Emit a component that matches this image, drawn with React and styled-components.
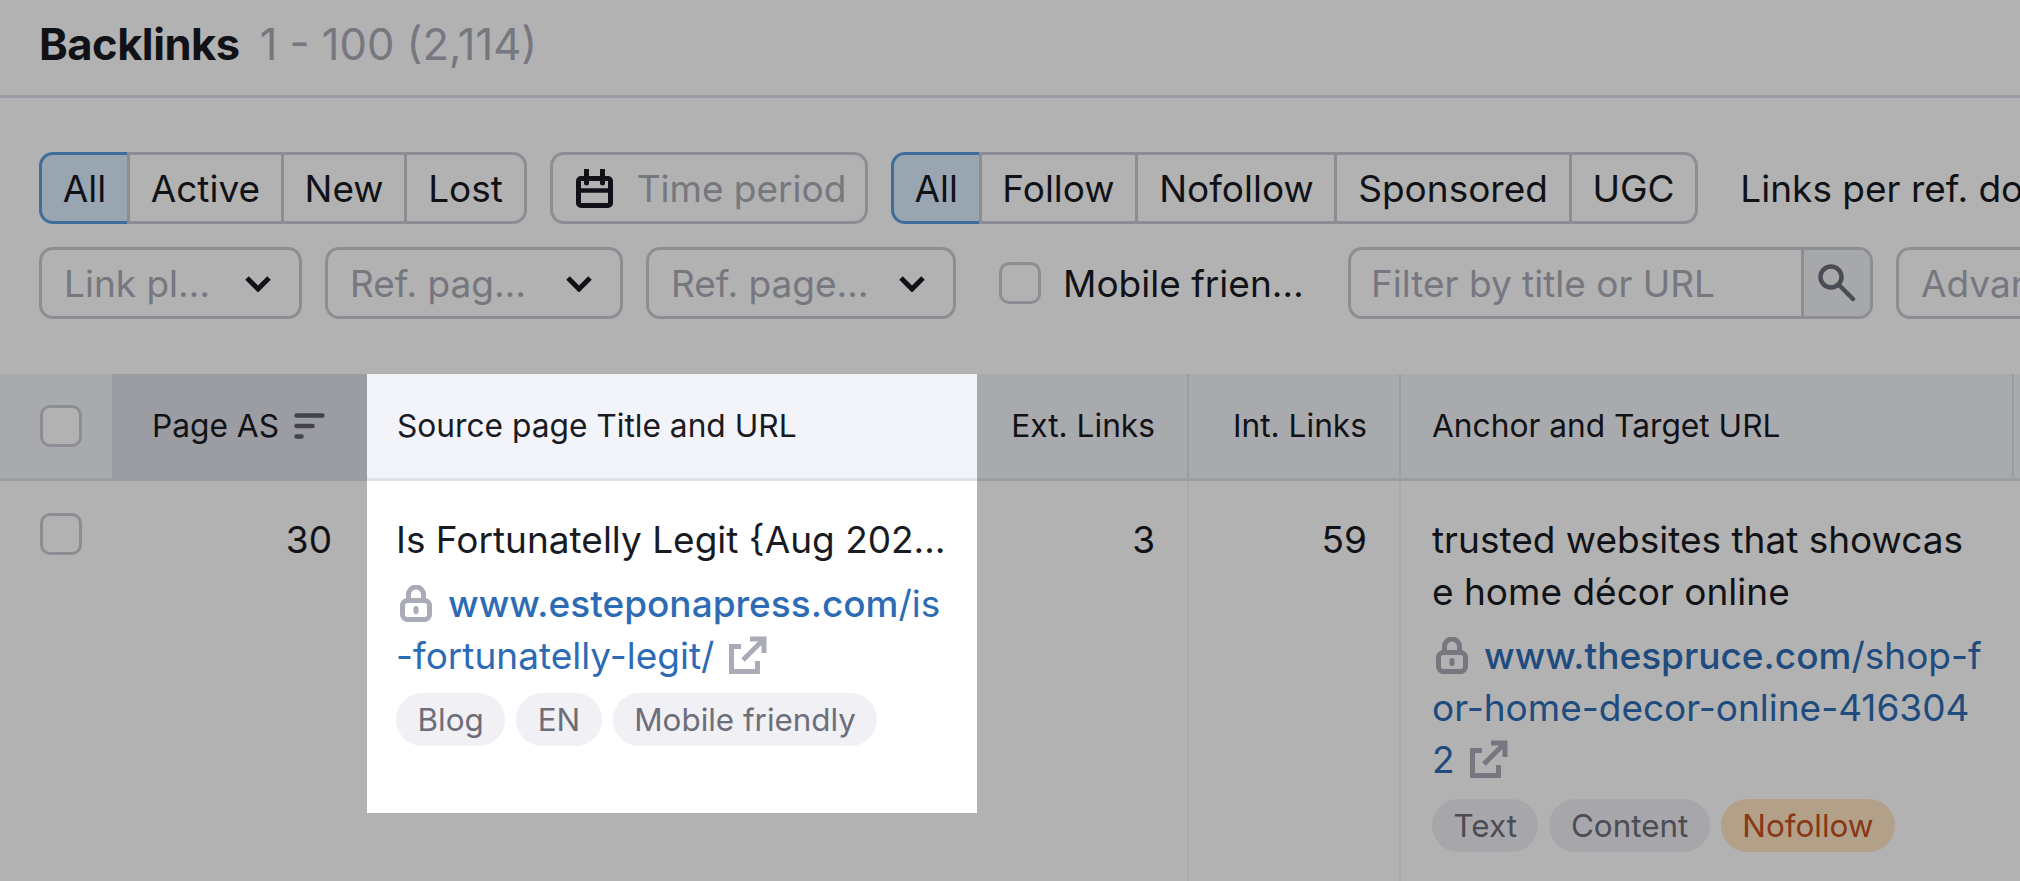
import React from 'react';
import styled, { createGlobalStyle, css } from 'styled-components';

const GlobalStyle = createGlobalStyle`
  html, body {
    margin: 0;
    background: #fff;
  }
  #root {
    width: 2020px;
    height: 881px;
    overflow: hidden;
    font-family: Inter, "Liberation Sans", sans-serif;
    color: #191b23;
  }
`;

const TitleBar = styled.header`
  box-sizing: border-box;
  height: 98px;
  padding: 19px 39px 0;
  border-bottom: 3px solid #dcdde8;
  display: flex;
  align-items: baseline;
  gap: 20px;
  font-size: 43.5px;
  line-height: 50px;
`;

const Title = styled.h1`
  margin: 0;
  font-size: 43.5px;
  font-weight: 700;
  letter-spacing: -0.5px;
`;

const Count = styled.span`
  color: #a9abb6;
`;

const Filters = styled.section`
  box-sizing: border-box;
  height: 276px;
  padding: 54px 0 0 39px;
  display: flex;
  flex-direction: column;
  gap: 23px;
  white-space: nowrap;
  font-size: 37px;
`;

const FilterRow = styled.div`
  display: flex;
  align-items: center;
  gap: 23px;
  height: 72px;

  > * {
    flex: none;
  }
`;

const Segmented = styled.div`
  display: flex;
  height: 72px;
`;

const Segment = styled.button`
  box-sizing: border-box;
  height: 72px;
  margin: 0 0 0 -3px;
  padding: 0 20.75px;
  font: inherit;
  color: #191b23;
  background: #fff;
  border: 3px solid #c9ccd4;
  position: relative;

  &:first-child {
    margin-left: 0;
    border-radius: 14px 0 0 14px;
  }
  &:last-child {
    border-radius: 0 14px 14px 0;
  }
  ${(p) =>
    p.$active &&
    css`
      background: #dbeeff;
      border-color: #5b9ee0;
      z-index: 0;
    `}
`;

const TimeButton = styled.div`
  box-sizing: border-box;
  width: 318px;
  height: 72px;
  padding-left: 23px;
  display: flex;
  align-items: center;
  gap: 24px;
  color: #a9abb6;
  border: 3px solid #c9ccd4;
  border-radius: 14px;
`;

const PerDomain = styled.span`
  margin-left: 19px;
`;

const Select = styled.div`
  box-sizing: border-box;
  width: ${(p) => p.$width}px;
  height: 72px;
  padding: 0 27px 0 22px;
  display: flex;
  align-items: center;
  justify-content: space-between;
  color: #a9abb6;
  border: 3px solid #c9ccd4;
  border-radius: 14px;
`;

const Check = styled.span`
  box-sizing: border-box;
  display: block;
  flex: none;
  width: 42px;
  height: 42px;
  background: #fff;
  border: 3px solid #c9ccd4;
  border-radius: 10px;
`;

const CheckLabel = styled.label`
  margin-left: 20px;
  display: flex;
  align-items: center;
  gap: 22px;
  width: 326px;
`;

const SearchBox = styled.div`
  box-sizing: border-box;
  width: 525px;
  height: 72px;
  display: flex;
  border: 3px solid #c9ccd4;
  border-radius: 14px;
  overflow: hidden;
`;

const SearchInput = styled.div`
  flex: 1;
  padding-left: 20px;
  display: flex;
  align-items: center;
  color: #a9abb6;
`;

const SearchButton = styled.div`
  flex: none;
  width: 66px;
  display: flex;
  align-items: center;
  justify-content: center;
  background: #f0f1f4;
  border-left: 3px solid #c9ccd4;
`;

const Advanced = styled.div`
  box-sizing: border-box;
  width: 300px;
  height: 72px;
  padding-left: 22px;
  display: flex;
  align-items: center;
  color: #a9abb6;
  border: 3px solid #c9ccd4;
  border-radius: 14px;
`;

const Table = styled.section`
  display: flex;
  align-items: flex-start;
  font-size: 37px;
  line-height: 52px;
`;

const Column = styled.div`
  box-sizing: border-box;
  flex: none;
  width: ${(p) => p.$width}px;
`;

const Spotlight = styled(Column)`
  position: relative;
  z-index: 1;
  background: #fff;
  box-shadow: 0 0 0 3000px rgba(0, 0, 0, 0.3);
`;

const HeadCell = styled.div`
  box-sizing: border-box;
  height: 107px;
  padding: 0 ${(p) => p.$padRight ?? 32}px 0 ${(p) => p.$padLeft ?? 31}px;
  display: flex;
  align-items: center;
  justify-content: ${(p) => (p.$right ? 'flex-end' : 'flex-start')};
  gap: 15px;
  font-size: 31.7px;
  white-space: nowrap;
  background: ${(p) => (p.$sorted ? '#e0e1e9' : '#f3f4f9')};
  border-bottom: 3px solid #e0e1e9;
  border-left: ${(p) => (p.$divider ? '2px solid #e0e1e9' : '0')};
`;

const BodyCell = styled.div`
  box-sizing: border-box;
  padding: 33px ${(p) => p.$padRight ?? 32}px 0 ${(p) => p.$padLeft ?? 31}px;
  text-align: ${(p) => (p.$right ? 'right' : 'left')};
  min-height: 401px;
  border-left: ${(p) => (p.$divider ? '2px solid #f3f4f9' : '0')};
`;

const SpotCell = styled.div`
  box-sizing: border-box;
  height: 332px;
  padding: 33px 0 0 29px;
`;

const RowCheck = styled.div`
  padding: 32px 0 0 40px;
`;

const HeadCheck = styled.div`
  height: 107px;
  padding-left: 40px;
  display: flex;
  align-items: center;
  background: #f3f4f9;
  box-sizing: border-box;
  border-bottom: 3px solid #e0e1e9;
`;

const PageTitle = styled.div`
  white-space: nowrap;
`;

const Anchor = styled.div`
  word-break: break-all;
`;

const LinkText = styled.a`
  display: block;
  margin-top: 12px;
  color: #2d6cb5;
  word-break: break-all;
  text-decoration: none;

  b {
    font-weight: 500;
  }
`;

const Lock = styled.svg`
  width: 32px;
  height: 37px;
  margin: 0 16px 0 4px;
  vertical-align: -5px;
`;

const External = styled.svg`
  width: 38px;
  height: 38px;
  margin-left: 15px;
  vertical-align: -5px;
`;

const Tags = styled.div`
  display: flex;
  gap: 11px;
  margin-top: ${(p) => p.$top}px;
`;

const Tag = styled.span`
  box-sizing: border-box;
  height: 53px;
  padding: 0 21.5px;
  display: flex;
  align-items: center;
  font-size: 31.4px;
  border-radius: 27px;
  color: ${(p) => (p.$warn ? '#c4501f' : '#6c6e79')};
  background: ${(p) => (p.$warn ? '#ffe6c4' : '#f0f0f5')};
`;

const CalendarIcon = () => (
  <svg width="37" height="39" viewBox="0 0 37 39" fill="none">
    <rect x="2.5" y="9.5" width="32" height="27" rx="2.5" stroke="#191b23" strokeWidth="5" />
    <path d="M2 21.5h33" stroke="#191b23" strokeWidth="4.5" />
    <path d="M10.5 1v13M26.5 1v13" stroke="#191b23" strokeWidth="5" strokeLinecap="round" />
  </svg>
);

const Chevron = () => (
  <svg width="28" height="17" viewBox="0 0 28 17" fill="none">
    <path d="M3 3l11 11L25 3" stroke="#191b23" strokeWidth="5" />
  </svg>
);

const SearchIcon = () => (
  <svg width="38" height="38" viewBox="0 0 38 38" fill="none">
    <circle cx="13" cy="13" r="10.5" stroke="#6c6e79" strokeWidth="4.5" />
    <path d="M21 21l14 14" stroke="#6c6e79" strokeWidth="4.5" strokeLinecap="round" />
  </svg>
);

const SortIcon = () => (
  <svg width="31" height="26" viewBox="0 0 31 26" fill="none">
    <path d="M2.5 2.5h26M2.5 13h16M2.5 23.5h5" stroke="#5f616c" strokeWidth="4.5" strokeLinecap="round" />
  </svg>
);

const LockIcon = () => (
  <Lock viewBox="0 0 32 37" fill="none">
    <path d="M8.5 16V9.5a7.5 7.5 0 0 1 15 0V16" stroke="#a9abb6" strokeWidth="5" />
    <rect x="2.5" y="15.5" width="27" height="19" rx="5" stroke="#a9abb6" strokeWidth="5" />
    <rect x="13.5" y="21" width="5" height="8" rx="2.5" fill="#a9abb6" />
  </Lock>
);

const ExternalIcon = () => (
  <External viewBox="0 0 38 38" fill="none">
    <path d="M12 10.5H2.5V35.5H28.5V25" stroke="#a9abb6" strokeWidth="5" />
    <path d="M14 24L34 4M21 3h14v14" stroke="#a9abb6" strokeWidth="5" />
  </External>
);

export default function App() {
  return (
    <>
      <GlobalStyle />
      <TitleBar>
        <Title>Backlinks</Title>
        <Count>1 - 100 (2,114)</Count>
      </TitleBar>
      <Filters>
        <FilterRow>
          <Segmented>
            <Segment $active>All</Segment>
            <Segment>Active</Segment>
            <Segment>New</Segment>
            <Segment>Lost</Segment>
          </Segmented>
          <TimeButton>
            <CalendarIcon />
            Time period
          </TimeButton>
          <Segmented>
            <Segment $active>All</Segment>
            <Segment>Follow</Segment>
            <Segment>Nofollow</Segment>
            <Segment>Sponsored</Segment>
            <Segment>UGC</Segment>
          </Segmented>
          <PerDomain>Links per ref. domain</PerDomain>
        </FilterRow>
        <FilterRow>
          <Select $width={263}>
            Link pl…
            <Chevron />
          </Select>
          <Select $width={298}>
            Ref. pag…
            <Chevron />
          </Select>
          <Select $width={310}>
            Ref. page…
            <Chevron />
          </Select>
          <CheckLabel>
            <Check />
            Mobile frien…
          </CheckLabel>
          <SearchBox>
            <SearchInput>Filter by title or URL</SearchInput>
            <SearchButton>
              <SearchIcon />
            </SearchButton>
          </SearchBox>
          <Advanced>Advanced filters</Advanced>
        </FilterRow>
      </Filters>
      <Table>
        <Column $width={112}>
          <HeadCheck>
            <Check />
          </HeadCheck>
          <RowCheck>
            <Check />
          </RowCheck>
        </Column>
        <Column $width={255}>
          <HeadCell $sorted $right $padRight={42}>
            Page AS
            <SortIcon />
          </HeadCell>
          <BodyCell $right $padRight={35}>
            30
          </BodyCell>
        </Column>
        <Spotlight $width={610}>
          <HeadCell $padLeft={30}>Source page Title and URL</HeadCell>
          <SpotCell>
            <PageTitle>Is Fortunatelly Legit {'{'}Aug 202…</PageTitle>
            <LinkText>
              <LockIcon />
              <b>www.esteponapress.com</b>/is
              <br />
              -fortunatelly-legit/
              <ExternalIcon />
            </LinkText>
            <Tags $top={11}>
              <Tag>Blog</Tag>
              <Tag>EN</Tag>
              <Tag>Mobile friendly</Tag>
            </Tags>
          </SpotCell>
        </Spotlight>
        <Column $width={210}>
          <HeadCell $right>Ext. Links</HeadCell>
          <BodyCell $right>3</BodyCell>
        </Column>
        <Column $width={212}>
          <HeadCell $right $divider>
            Int. Links
          </HeadCell>
          <BodyCell $right $divider>
            59
          </BodyCell>
        </Column>
        <Column $width={613}>
          <HeadCell $divider>Anchor and Target URL</HeadCell>
          <BodyCell $divider $padRight={29}>
            <Anchor>trusted websites that showcase home décor online</Anchor>
            <LinkText>
              <LockIcon />
              <b>www.thespruce.com</b>/shop-for-home-decor-online-4163042
              <ExternalIcon />
            </LinkText>
            <Tags $top={13}>
              <Tag>Text</Tag>
              <Tag>Content</Tag>
              <Tag $warn>Nofollow</Tag>
            </Tags>
          </BodyCell>
        </Column>
        <Column $width={40}>
          <HeadCell $divider />
        </Column>
      </Table>
    </>
  );
}
